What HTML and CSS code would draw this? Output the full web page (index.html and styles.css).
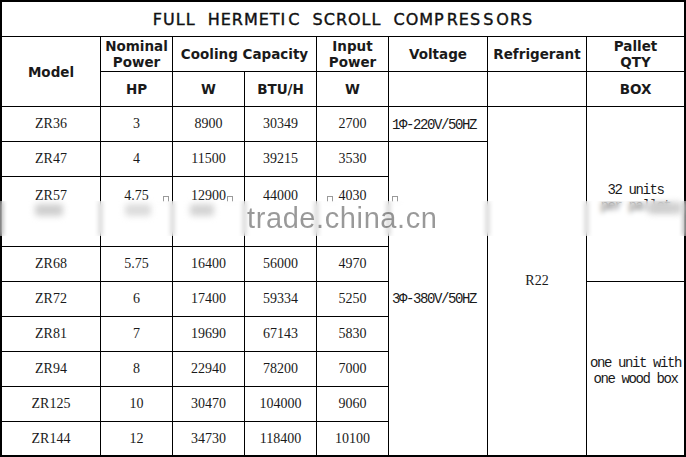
FILE: index.html
```html
<!DOCTYPE html>
<html lang="en">
<head>
<meta charset="utf-8">
<title>Full Hermetic Scroll Compressors</title>
<link rel="stylesheet" href="styles.css">
</head>
<body>
<div class="page">
  <div class="sheet" role="table">
    <div class="c title last-col">FULL HERMETI<span class="gap"> </span>C SCROLL COMP<span class="gap"> </span>RES<span class="gap"> </span>S<span class="gap"> </span>ORS</div>

    <div class="c h rs2">Model</div>
    <div class="c h two">Nominal<br>Power</div>
    <div class="c h cs2">Cooling Capacity</div>
    <div class="c h two">Input<br>Power</div>
    <div class="c h">Voltage</div>
    <div class="c h">Refrigerant</div>
    <div class="c h two last-col">Pallet<br>QTY</div>

    <div class="c h">HP</div>
    <div class="c h">W</div>
    <div class="c h">BTU/H</div>
    <div class="c h">W</div>
    <div class="c h"></div>
    <div class="c h"></div>
    <div class="c h last-col">BOX</div>

    <div class="c d">ZR36</div>
    <div class="c d">3</div>
    <div class="c d">8900</div>
    <div class="c d">30349</div>
    <div class="c d">2700</div>
    <div class="c m volt">1Φ-220V/50HZ</div>
    <div class="c d rs9 last-row">R22</div>
    <div class="c m rs4 last-col pallet">32 units<br>per pallet</div>

    <div class="c d">ZR47</div>
    <div class="c d">4</div>
    <div class="c d">11500</div>
    <div class="c d">39215</div>
    <div class="c d">3530</div>
    <div class="c m volt rs8 last-row">3Φ-380V/50HZ</div>

    <div class="c d tall">ZR57</div>
    <div class="c d tall">4.75</div>
    <div class="c d tall">12900</div>
    <div class="c d tall">44000</div>
    <div class="c d tall">4030</div>

    <div class="c d">ZR68</div>
    <div class="c d">5.75</div>
    <div class="c d">16400</div>
    <div class="c d">56000</div>
    <div class="c d">4970</div>

    <div class="c d">ZR72</div>
    <div class="c d">6</div>
    <div class="c d">17400</div>
    <div class="c d">59334</div>
    <div class="c d">5250</div>
    <div class="c m rs5 last-col last-row box">one unit with<br>one wood box</div>

    <div class="c d">ZR81</div>
    <div class="c d">7</div>
    <div class="c d">19690</div>
    <div class="c d">67143</div>
    <div class="c d">5830</div>

    <div class="c d">ZR94</div>
    <div class="c d">8</div>
    <div class="c d">22940</div>
    <div class="c d">78200</div>
    <div class="c d">7000</div>

    <div class="c d">ZR125</div>
    <div class="c d">10</div>
    <div class="c d">30470</div>
    <div class="c d">104000</div>
    <div class="c d">9060</div>

    <div class="c d last-row">ZR144</div>
    <div class="c d last-row">12</div>
    <div class="c d last-row">34730</div>
    <div class="c d last-row">118400</div>
    <div class="c d last-row">10100</div>
  </div>

  <div class="tofu t1"></div>
  <div class="tofu t2"></div>
  <div class="tofu t3"></div>
  <div class="tofu t4"></div>

  <div class="band" aria-hidden="true">
    <span class="blob b1"></span>
    <span class="blob b2"></span>
    <span class="blob b3"></span>
    <span class="blob b4"></span>
  </div>
  <div class="watermark">trade.china.cn</div>
</div>
</body>
</html>
```

FILE: styles.css
```css
* { box-sizing: border-box; }
html, body { margin: 0; padding: 0; background: #fff; }

.page {
  position: relative;
  width: 686px;
  height: 457px;
  overflow: hidden;
}

.sheet {
  display: grid;
  grid-template-columns: 99px 72px 72px 72px 72px 99px 99px 99px;
  grid-template-rows: 35px 35px 35px 35px 35px 70px 35px 35px 35px 35px 35px 35px;
  width: 686px;
  height: 457px;
  border-top: 2px solid #000;
  border-left: 2px solid #000;
  background: #fff;
}

.c {
  display: flex;
  align-items: center;
  justify-content: center;
  text-align: center;
  border-right: 1px solid #000;
  border-bottom: 1px solid #000;
  color: #111;
}

.last-col { border-right-width: 2px; }
.last-row { border-bottom-width: 2px; }

.rs2 { grid-row: span 2; }
.rs4 { grid-row: span 4; }
.rs5 { grid-row: span 5; }
.rs8 { grid-row: span 8; }
.rs9 { grid-row: span 9; }
.cs2 { grid-column: span 2; }

.title {
  grid-column: span 8;
  font-family: "DejaVu Sans", sans-serif;
  font-size: 16px;
  letter-spacing: 1px;
  word-spacing: 6px;
  color: #111;
  -webkit-text-stroke: 0.4px #111;
  padding-top: 1px;
}
.title .gap { display: inline-block; width: 2px; }

.h {
  font-family: "DejaVu Sans", sans-serif;
  font-weight: bold;
  font-size: 13.5px;
  line-height: 16px;
  color: #1a1a1a;
}

.d {
  font-family: "Liberation Serif", serif;
  font-size: 14px;
  color: #1a1a1a;
}

.m {
  font-family: "Liberation Mono", monospace;
  font-size: 14px;
  letter-spacing: -1.4px;
  line-height: 16px;
  color: #1a1a1a;
}

.volt {
  justify-content: flex-start;
  padding-left: 3px;
  padding-top: 1px;
}

.tall {
  align-items: flex-start;
  padding-top: 11px;
}

.pallet { padding-top: 8px; }
.box { padding-top: 5px; }

.tofu {
  position: absolute;
  top: 196px;
  width: 6px;
  height: 6px;
  border: 1px solid #9a9a9a;
  border-bottom: none;
}
.t1 { left: 163px; }
.t2 { left: 227px; }
.t3 { left: 327px; }
.t4 { left: 392px; }

.band {
  position: absolute;
  left: 0;
  top: 201px;
  width: 686px;
  height: 35px;
  background: rgba(255, 255, 255, 0.35);
  -webkit-backdrop-filter: blur(2.5px);
  backdrop-filter: blur(2.5px);
}

.blob {
  position: absolute;
  height: 12px;
  background: #cfcfcf;
  filter: blur(3px);
  border-radius: 3px;
}
.b1 { left: 35px; top: 3px; width: 28px; }
.b2 { left: 125px; top: 3px; width: 26px; background: #dcdcdc; }
.b3 { left: 190px; top: 3px; width: 24px; background: #d4d4d4; }
.b4 { left: 648px; top: 1px; width: 34px; background: #d0d0d0; }

.watermark {
  position: absolute;
  left: 247px;
  top: 206px;
  font-family: "Liberation Sans", Arial, sans-serif;
  font-size: 29px;
  letter-spacing: 0.6px;
  line-height: 24px;
  color: rgba(0, 0, 0, 0.4);
  white-space: nowrap;
}
```
